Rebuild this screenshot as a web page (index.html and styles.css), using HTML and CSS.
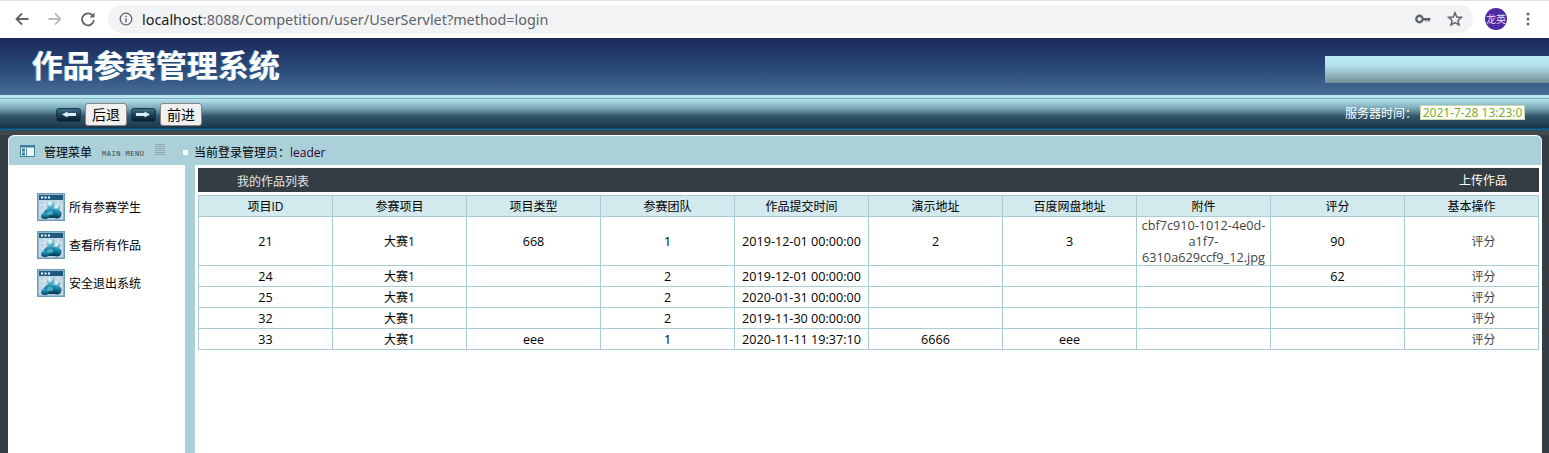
FILE: index.html
```html
<!DOCTYPE html>
<html lang="zh">
<head>
<meta charset="utf-8">
<title>作品参赛管理系统</title>
<link rel="stylesheet" href="styles.css">
</head>
<body>
<div class="browser">
  <svg class="nav-icon" viewBox="0 0 16 16" width="16" height="16"><path d="M14.5 8H3M8 2.5 2.5 8 8 13.5" fill="none" stroke="#5f6368" stroke-width="1.8"/></svg>
  <svg class="nav-icon" viewBox="0 0 16 16" width="16" height="16"><path d="M1.5 8H13M8 2.5 13.5 8 8 13.5" fill="none" stroke="#b9bbbe" stroke-width="1.8"/></svg>
  <svg class="nav-icon" viewBox="0 0 16 16" width="16" height="16"><path d="M13.2 5.2A6 6 0 1 0 14 9.2" fill="none" stroke="#5f6368" stroke-width="1.8"/><path d="M14.5 1.5V6.5H9.5Z" fill="#5f6368"/></svg>
  <div class="omnibox">
    <svg viewBox="0 0 14 14" width="14" height="14"><circle cx="7" cy="7" r="5.8" fill="none" stroke="#5f6368" stroke-width="1.3"/><path d="M7 6.2V10.2M7 3.8V5" stroke="#5f6368" stroke-width="1.4"/></svg>
    <span class="url"><span class="host">localhost</span>:8088/Competition/user/UserServlet?method=login</span>
    <span class="grow"></span>
    <svg class="omni-key" viewBox="0 0 16 10" width="16" height="10"><circle cx="4.5" cy="5" r="3.2" fill="none" stroke="#5f6368" stroke-width="2.4"/><path d="M7 4H15.5V6H14.5V7.6H12.6V6H11.5V7.2H9.8V6H7Z" fill="#5f6368"/></svg>
    <svg class="omni-star" viewBox="0 0 16 16" width="16" height="16"><path d="M8 1.8 9.8 6 14.4 6.4 10.9 9.4 12 13.9 8 11.5 4 13.9 5.1 9.4 1.6 6.4 6.2 6Z" fill="none" stroke="#5f6368" stroke-width="1.5"/></svg>
  </div>
  <span class="avatar">龙英</span>
  <svg class="kebab" viewBox="0 0 4 14" width="4" height="14"><circle cx="2" cy="2" r="1.5" fill="#5f6368"/><circle cx="2" cy="7" r="1.5" fill="#5f6368"/><circle cx="2" cy="12" r="1.5" fill="#5f6368"/></svg>
</div>

<header class="banner">
  <h1 class="brand">作品参赛管理系统</h1>
  <div class="banner-block"></div>
</header>

<div class="toolbar">
  <svg class="arrow" viewBox="0 0 25 14" width="25" height="14"><rect x=".5" y=".5" width="24" height="13" rx="2.5" fill="url(#ab)" stroke="#16384a"/><path d="M6 6.5 11.5 3.5V5H20V8H11.5V9.5Z" fill="#d9eef4"/><defs><linearGradient id="ab" x1="0" y1="0" x2="0" y2="1"><stop offset="0" stop-color="#3f7288"/><stop offset=".5" stop-color="#1a3f54"/><stop offset="1" stop-color="#071a26"/></linearGradient></defs></svg>
  <button class="tool-btn" type="button">后退</button>
  <svg class="arrow arrow-next" viewBox="0 0 25 14" width="25" height="14"><rect x=".5" y=".5" width="24" height="13" rx="2.5" fill="url(#ab)" stroke="#16384a"/><path d="M19 6.5 13.5 3.5V5H5V8H13.5V9.5Z" fill="#d9eef4"/></svg>
  <button class="tool-btn" type="button">前进</button>
  <span class="grow"></span>
  <span class="clock-label">服务器时间：</span>
  <span class="clock">2021-7-28 13:23:0</span>
</div>

<div class="stage">
  <div class="hatch"></div>
  <div class="panel">
    <div class="panel-head">
      <div class="menu-head">
        <svg class="menu-icon" viewBox="0 0 15 12" width="15" height="12"><rect x=".5" y=".5" width="14" height="11" fill="#eaf5f8" stroke="#3d7f99"/><rect x="1" y="1" width="13" height="1.5" fill="#3d7f99"/><rect x="2" y="3.5" width="3" height="3" fill="#3d7f99"/><rect x="2" y="7.5" width="3" height="3" fill="#3d7f99"/><rect x="6" y="3" width=".8" height="8" fill="#3d7f99"/></svg>
        <span class="menu-title">管理菜单</span>
        <span class="menu-sub">MAIN MENU</span>
        <span class="menu-lines"></span>
      </div>
      <span class="bullet"></span>
      <span class="admin">当前登录管理员：<span class="admin-name">leader</span></span>
    </div>
    <div class="panel-body">
      <nav class="sidebar">
        <a class="side-item"><svg class="user-icon" viewBox="0 0 28 28" width="28" height="28"><use href="#usr"/></svg>所有参赛学生</a>
        <a class="side-item"><svg class="user-icon" viewBox="0 0 28 28" width="28" height="28"><use href="#usr"/></svg>查看所有作品</a>
        <a class="side-item"><svg class="user-icon" viewBox="0 0 28 28" width="28" height="28"><use href="#usr"/></svg>安全退出系统</a>
        <svg class="defs" width="0" height="0"><defs>
          <linearGradient id="ppl" x1="0" y1="0" x2="0" y2="1"><stop offset="0" stop-color="#35a6c4"/><stop offset=".5" stop-color="#14779b"/><stop offset="1" stop-color="#053650"/></linearGradient>
          <radialGradient id="hd" cx=".4" cy=".3" r=".8"><stop offset="0" stop-color="#ffffff"/><stop offset=".45" stop-color="#9adcea"/><stop offset="1" stop-color="#15708f"/></radialGradient>
          <g id="usr">
            <rect x=".75" y=".75" width="26.5" height="26.5" fill="#bfd5e1" stroke="#6a9cbc" stroke-width="1.5"/>
            <rect x="2" y="2" width="24" height="5" fill="#1c5a80"/>
            <rect x="4" y="3.5" width="2" height="2" fill="#fff"/><rect x="7.5" y="3.5" width="2" height="2" fill="#fff"/><rect x="11" y="3.5" width="2" height="2" fill="#fff"/>
            <path d="M2 12H26M2 17H26M2 22H26M8 7V26M21 7V26" stroke="#e4eff4" stroke-width=".8"/>
            <circle cx="20" cy="14.5" r="2.8" fill="url(#hd)"/>
            <ellipse cx="20" cy="21" rx="4.5" ry="4.5" fill="url(#ppl)"/>
            <circle cx="13.5" cy="11.5" r="3.8" fill="url(#hd)"/>
            <path d="M6.5 25C5 20 8 15 13.5 15S22 20 20.5 25Z" fill="url(#ppl)"/>
            <ellipse cx="8" cy="23" rx="4" ry="3" fill="url(#ppl)"/>
            <ellipse cx="13" cy="20" rx="3" ry="2" fill="#6fd0e4" opacity=".6"/>
          </g>
        </defs></svg>
      </nav>
      <div class="splitter"></div>
      <main class="content">
        <div class="list-bar"><span>我的作品列表</span><a class="upload">上传作品</a></div>
        <table class="grid">
          <thead>
            <tr><th>项目ID</th><th>参赛项目</th><th>项目类型</th><th>参赛团队</th><th>作品提交时间</th><th>演示地址</th><th>百度网盘地址</th><th>附件</th><th>评分</th><th>基本操作</th></tr>
          </thead>
          <tbody>
            <tr><td class="num">21</td><td>大赛1</td><td class="num">668</td><td class="num">1</td><td class="num">2019-12-01 00:00:00</td><td class="num">2</td><td class="num">3</td><td class="muted">cbf7c910-1012-4e0d-a1f7-6310a629ccf9_12.jpg</td><td class="num">90</td><td class="op"><a>评分</a></td></tr>
            <tr><td class="num">24</td><td>大赛1</td><td></td><td class="num">2</td><td class="num">2019-12-01 00:00:00</td><td></td><td></td><td></td><td class="num">62</td><td class="op"><a>评分</a></td></tr>
            <tr><td class="num">25</td><td>大赛1</td><td></td><td class="num">2</td><td class="num">2020-01-31 00:00:00</td><td></td><td></td><td></td><td></td><td class="op"><a>评分</a></td></tr>
            <tr><td class="num">32</td><td>大赛1</td><td></td><td class="num">2</td><td class="num">2019-11-30 00:00:00</td><td></td><td></td><td></td><td></td><td class="op"><a>评分</a></td></tr>
            <tr><td class="num">33</td><td>大赛1</td><td class="num">eee</td><td class="num">1</td><td class="num">2020-11-11 19:37:10</td><td class="num">6666</td><td class="num">eee</td><td></td><td></td><td class="op"><a>评分</a></td></tr>
          </tbody>
        </table>
      </main>
    </div>
  </div>
</div>
</body>
</html>
```

FILE: styles.css
```css
* { box-sizing: border-box; }
html, body { margin: 0; height: 453px; overflow: hidden; background: #343c44; }
body { font-family: "Open Sans", "Noto Sans CJK SC", sans-serif; font-size: 12px; color: #000; }
.grow { flex: 1; }

.browser { height: 38px; background: #fff; box-shadow: inset 0 1px 0 #dee1e6; display: flex; align-items: center; padding: 0 0 0 14px; }
.nav-icon { margin-right: 17px; flex: none; }
.nav-icon:nth-of-type(3) { margin-right: 12px; }
.omnibox { width: 1365px; height: 28px; background: #f1f3f4; border-radius: 14px; display: flex; align-items: center; padding: 0 10px 0 11px; }
.url { margin-left: 9px; font-family: "Noto Sans", sans-serif; font-size: 14.4px; color: #5f6368; }
.host { color: #202124; }
.omni-key { margin-right: 16px; }
.avatar { width: 22px; height: 22px; margin-left: 12px; border-radius: 50%; background: #5029a3; color: #e8dff8; font-size: 10px; line-height: 22px; text-align: center; flex: none; }
.kebab { margin-left: 19px; flex: none; }

.banner { height: 57px; background: linear-gradient(#1a2a5a, #2b4a78 55%, #466e96); display: flex; align-items: flex-start; }
.brand { margin: 6px 0 0 32px; font-size: 31px; line-height: 40px; font-weight: 700; color: #fff; flex: 1; font-family: "Noto Sans CJK SC", sans-serif; text-shadow: -1px 0 0 #6fb7d8; }
.banner-block { width: 224px; height: 27px; margin-top: 18px; background: linear-gradient(#bdebf6, #b5e1ec 35%, #718f97); }

.toolbar { height: 35px; background: linear-gradient(#b8e6f0 0, #b8e6f0 3px, #7faab3 3px, #7faab3 4px, #b6e3ee 4px, #76a3b2 14px, #33556a 21px, #1c3a4c 32px, #14304a 33px, #0a6a9a 34px, #0a6a9a 35px); display: flex; align-items: center; padding: 0 24px 0 56px; }
.arrow { flex: none; margin-top: 4px; }
.arrow-next { margin-left: 4px; }
.tool-btn { width: 42px; height: 23px; margin: 4px 0 0 4px; padding: 0; background: #f0f0f0; border: 1px solid #858585; border-radius: 3px; font: 14px/21px "Noto Sans CJK SC", sans-serif; color: #000; }
.clock-label { color: #fff; font-size: 12px; margin-right: 3px; }
.clock { width: 105px; height: 15px; background: #fff; border: 1px solid #c8d8a8; color: #7cae2e; font: 12px/13px "Noto Sans", sans-serif; text-align: center; white-space: nowrap; }

.stage { height: 323px; padding: 0 7px 0 8px; background: #343c44; position: relative; }
.hatch { height: 5px; margin: 0 -7px 0 -8px; background: repeating-conic-gradient(#4d5359 0 25%, #343c44 0 50%) 0 0 / 2px 2px; }
.panel { height: 318px; background: #acd0d9; border-top: 1px solid #fff; border-radius: 6px 6px 0 0; display: flex; flex-direction: column; box-shadow: inset 1px 0 0 #e6f2f5, inset -1px 0 0 #e6f2f5; }
.panel-head { height: 29px; padding-top: 3px; display: flex; align-items: center; flex: none; }
.menu-head { width: 175px; display: flex; align-items: center; padding-left: 12px; }
.menu-icon { flex: none; margin-top: -2px; }
.menu-title { margin-left: 9px; font-size: 12px; }
.menu-sub { margin: 4px 0 0 10px; font: 7px "DejaVu Sans Mono", monospace; color: #444; letter-spacing: .5px; white-space: nowrap; }
.menu-lines { width: 10px; height: 11px; margin-left: 11px; margin-top: -5px; background: repeating-linear-gradient(#92a8ae 0 1px, transparent 1px 2px); }
.bullet { width: 5px; height: 5px; background: #fff; flex: none; }
.admin { margin-left: 6px; font-size: 12px; }
.admin-name { color: #300030; }

.panel-body { flex: 1; display: flex; min-height: 0; }
.sidebar { width: 177px; background: #fff; padding-top: 28px; display: flex; flex-direction: column; gap: 10px; flex: none; }
.side-item { margin-left: 29px; display: flex; align-items: center; height: 28px; gap: 4px; font-size: 12px; }
.user-icon { flex: none; }
.defs { position: absolute; }
.splitter { width: 10px; flex: none; }
.content { flex: 1; background: #fff; padding: 3px 3px 0 3px; min-width: 0; }
.list-bar { height: 24px; background: #343c44; color: #e4e8ea; display: flex; justify-content: space-between; align-items: center; padding: 2px 32px 0 39px; font-size: 12px; }
.upload { color: #fff; margin-top: -3px; }
.grid { width: 1341px; margin-top: 3px; border-collapse: collapse; table-layout: fixed; border: 1px solid #a9ccd4; }
.grid th, .grid td { border: 1px solid #a9ccd4; padding: 2px 2px 0; text-align: center; font-weight: 400; font-size: 12px; line-height: 16px; height: 21px; overflow-wrap: anywhere; }
.grid th { background: #d2e9ee; }
.grid td.num { font-size: 12.6px; }
.grid td.muted { color: #444; font-size: 12.7px; padding: 0 2px; }
.grid td.op { color: #444; padding-left: 26px; }
```
